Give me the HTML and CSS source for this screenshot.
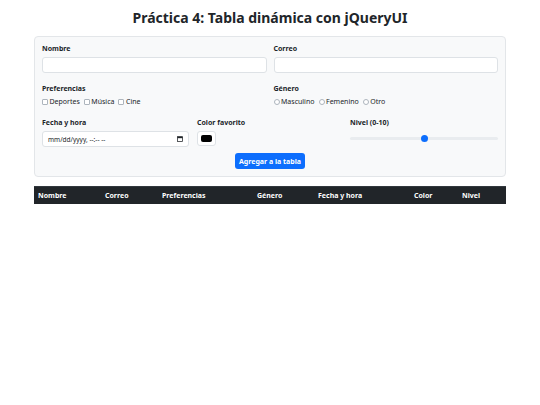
FILE: index.html
```html
<!DOCTYPE html>
<html lang="es">
<head>
<meta charset="utf-8">
<title>Práctica 4</title>
<link rel="stylesheet" href="styles.css">
</head>
<body>
<div class="container">
  <h1 class="title">Práctica 4: Tabla dinámica con jQueryUI</h1>
  <form class="card">
    <div class="row two r1">
      <div class="field">
        <label class="lbl">Nombre</label>
        <input class="ctl" type="text">
      </div>
      <div class="field">
        <label class="lbl">Correo</label>
        <input class="ctl" type="text">
      </div>
    </div>
    <div class="row two r2">
      <div class="field">
        <label class="lbl">Preferencias</label>
        <div class="opts">
          <span class="opt"><span class="box"></span>Deportes</span>
          <span class="opt"><span class="box"></span>Música</span>
          <span class="opt"><span class="box"></span>Cine</span>
        </div>
      </div>
      <div class="field">
        <label class="lbl">Género</label>
        <div class="opts">
          <span class="opt"><span class="box round"></span>Masculino</span>
          <span class="opt"><span class="box round"></span>Femenino</span>
          <span class="opt"><span class="box round"></span>Otro</span>
        </div>
      </div>
    </div>
    <div class="row three">
      <div class="field">
        <label class="lbl">Fecha y hora</label>
        <div class="ctl dt">
          <span>mm/dd/yyyy, --:-- --</span>
          <svg class="cal" viewBox="0 0 8 8" width="6" height="6"><rect x="0.6" y="0.9" width="6.8" height="6.5" fill="none" stroke="#212529" stroke-width="1"/><rect x="0.6" y="0.9" width="6.8" height="2" fill="#212529"/></svg>
        </div>
      </div>
      <div class="field">
        <label class="lbl">Color favorito</label>
        <div class="swatch"><span></span></div>
      </div>
      <div class="field">
        <label class="lbl">Nivel (0-10)</label>
        <div class="slider"><span class="thumb"></span></div>
      </div>
    </div>
    <div class="actions">
      <button type="button" class="btn">Agregar a la tabla</button>
    </div>
  </form>
  <table class="tbl">
    <thead>
      <tr>
        <th class="c1">Nombre</th>
        <th class="c2">Correo</th>
        <th class="c3">Preferencias</th>
        <th class="c4">Género</th>
        <th class="c5">Fecha y hora</th>
        <th class="c6">Color</th>
        <th class="c7">Nivel</th>
      </tr>
    </thead>
  </table>
</div>
</body>
</html>
```

FILE: styles.css
```css
* { box-sizing: border-box; }
html, body { margin: 0; padding: 0; background: #fff; }
body {
  font-family: "Noto Sans", "Open Sans", sans-serif;
  color: #212529;
  font-size: 7px;
}
.container {
  width: 472px;
  margin: 0 auto;
  padding-top: 9px;
}
.title {
  margin: 0 0 10px;
  text-align: center;
  font-size: 14px;
  font-weight: 700;
  line-height: 17px;
}
.card {
  background: #f8f9fa;
  border: 1px solid #e3e6e9;
  border-radius: 4px;
  padding: 7px 7px 7px;
  margin: 0 0 9px;
}
.row { display: grid; column-gap: 7px; }
.row.r1 { margin-bottom: 11px; }
.row.r2 { margin-bottom: 12px; }
.row.two { grid-template-columns: 1fr 1fr; }
.row.three { grid-template-columns: 147px 145px 1fr; column-gap: 8px; margin-bottom: 6px; }
.field { display: flex; flex-direction: column; }
.lbl {
  font-weight: 700;
  font-size: 7px;
  line-height: 9px;
  margin-bottom: 4px;
}
.ctl {
  height: 16px;
  border: 1px solid #dee2e6;
  border-radius: 3px;
  background: #fff;
  font: inherit;
  padding: 0 4px;
  width: 100%;
}
.dt {
  display: flex;
  align-items: center;
  justify-content: space-between;
  color: #212529;
  font-size: 6.5px;
  padding: 0 5px 0 5px;
}
.cal { display: block; }
.opts { display: flex; gap: 4px; line-height: 9px; color: #212529; }
.opt { display: inline-flex; align-items: center; gap: 1.5px; }
.box {
  display: inline-block;
  width: 6px; height: 6px;
  border: 1px solid #adb5bd;
  border-radius: 1px;
  background: #fff;
}
.box.round { border-radius: 50%; }
.swatch {
  width: 19px; height: 15px;
  background: #fff;
  border: 1px solid #dee2e6;
  border-radius: 3px;
  padding: 3px 3px;
}
.swatch span {
  display: block; width: 100%; height: 100%;
  background: #000; border-radius: 2px;
}
.slider {
  position: relative;
  height: 3px;
  margin-top: 6px;
  background: #e9ecef;
  border-radius: 2px;
}
.thumb {
  position: absolute;
  left: 71px; top: -2px;
  width: 7px; height: 7px;
  border-radius: 50%;
  background: #0d6efd;
}
.actions { display: flex; justify-content: center; }
.btn {
  background: #0d6efd;
  color: #fff;
  border: none;
  border-radius: 3px;
  font: inherit;
  font-weight: 700;
  font-size: 7px;
  height: 16px;
  width: 70px;
  padding: 0;
}
.tbl {
  width: 100%;
  border-collapse: collapse;
  background: #212529;
  table-layout: fixed;
}
.tbl th {
  color: #fff;
  text-align: left;
  font-weight: 700;
  font-size: 7px;
  height: 17px;
  padding: 0 4px;
  border-top: 1px solid #32383e;
}
.c1 { width: 67px; }
.c2 { width: 57px; }
.c3 { width: 95px; }
.c4 { width: 61px; }
.c5 { width: 96px; }
.c6 { width: 48px; }
```
